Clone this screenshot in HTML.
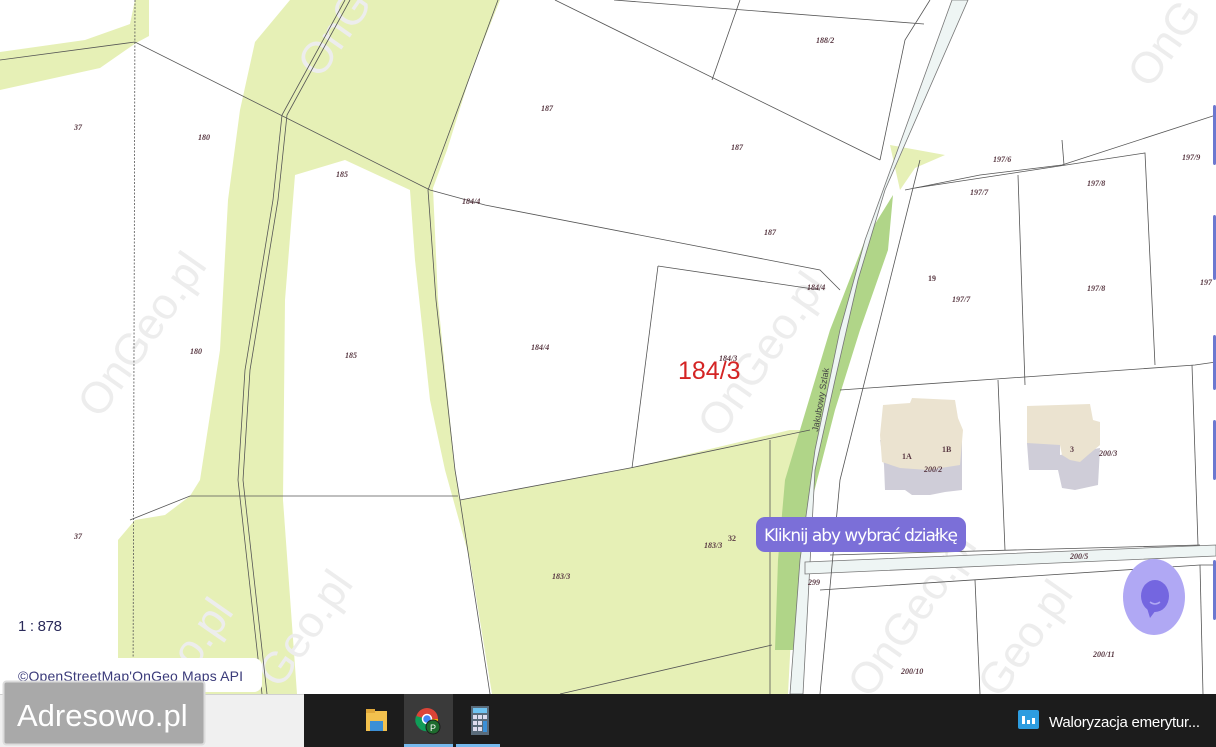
<!DOCTYPE html>
<html><head><meta charset="utf-8">
<style>
html,body{margin:0;padding:0;width:1216px;height:747px;overflow:hidden;background:#fff;font-family:"Liberation Sans",sans-serif}
svg{position:absolute;left:0;top:0}
.lb{font:italic bold 8px "Liberation Serif",serif;fill:#5a3a44}
.wm{font:44px "Liberation Sans",sans-serif;fill:#ededed}
</style></head><body>
<svg width="1216" height="747" viewBox="0 0 1216 747">
<!-- green areas -->
<g fill="#e6f0b6">
<polygon points="0,52 85,40 130,24 135,0 149,0 149,36 136,43 100,68 0,90"/>
<polygon points="290,0 500,0 472,70 447,150 433,188 438,300 455,470 460,500 630,468 790,430 812,430 795,560 788,694 492,694 470,560 445,470 430,400 415,260 410,190 345,160 295,175 285,300 283,500 297,694 135,694 118,694 118,540 135,520 165,515 190,496 200,480 220,350 228,200 240,110 255,42"/>
<polygon points="890,145 945,155 915,168 900,190"/>
</g>
<!-- watermarks -->
<g class="wm">
<text transform="translate(320,80) rotate(-55)">OnGeo</text>
<text transform="translate(100,420) rotate(-55)">OnGeo.pl</text>
<text transform="translate(720,440) rotate(-55)">OnGeo.pl</text>
<text transform="translate(180,690) rotate(-55)">eo.pl</text>
<text transform="translate(280,690) rotate(-55)">Geo.pl</text>
<text transform="translate(870,700) rotate(-55)">OnGeo.pl</text>
<text transform="translate(1000,700) rotate(-55)">Geo.pl</text>
<text transform="translate(1150,90) rotate(-55)">OnG</text>
</g>
<polygon fill="#b0d588" points="893,195 888,250 860,330 835,410 812,500 805,600 800,650 775,650 778,560 785,480 800,430 830,330 865,240"/>
<!-- roads -->
<polygon fill="#eef5f4" stroke="#777" stroke-width="0.8" points="952,0 968,0 885,190 858,280 835,380 815,470 803,694 790,694 800,560 815,450 840,330 865,240"/>
<polygon fill="#eef5f4" stroke="#777" stroke-width="0.8" points="805,562 1216,545 1216,556 805,574"/>
<!-- lines -->
<g stroke="#555" stroke-width="0.8" fill="none">
<polyline points="0,60 135,42 430,190 485,205 820,270 840,290"/>
<polyline points="135,0 133,694" stroke-dasharray="2,1.5"/>
<polyline points="498,0 428,190 436,300 455,470 460,500 490,694"/>
<polyline points="345,0 282,115 273,200 245,370 238,480 262,694"/>
<polyline points="350,0 287,115 278,200 250,370 243,480 267,694"/>
<polyline points="130,520 190,496 458,496"/>
<polyline points="460,500 630,468 810,430"/>
<polyline points="658,266 632,468"/>
<polyline points="658,266 820,290"/>
<polyline points="555,0 880,160"/>
<polyline points="614,0 924,24"/>
<polyline points="740,0 712,80"/>
<polyline points="930,0 905,40 880,160"/>
<polyline points="905,190 980,175 1062,165 1216,115"/>
<polyline points="915,188 1145,153 1155,365"/>
<polyline points="1018,175 1025,385"/>
<polyline points="1062,140 1064,165"/>
<polyline points="920,160 860,400 840,480 820,694"/>
<polyline points="840,390 1195,365 1216,362"/>
<polyline points="998,380 1005,550"/>
<polyline points="1192,365 1198,545"/>
<polyline points="830,555 1200,545"/>
<polyline points="820,590 1200,565 1216,565"/>
<polyline points="975,580 980,694"/>
<polyline points="1200,565 1203,694"/>
<polyline points="560,694 772,645"/>
<polyline points="770,440 770,694"/>
</g>
<!-- buildings -->
<g>
<polygon fill="#cfcdd8" points="880,440 884,465 885,490 905,490 912,495 930,495 945,492 962,490 962,440"/>
<polygon fill="#ebe3d0" points="883,405 910,403 912,398 955,400 958,418 963,430 960,465 928,470 900,468 882,462 880,435"/>
<polygon fill="#cfcdd8" points="1027,443 1060,443 1060,455 1100,448 1098,485 1075,490 1062,488 1058,470 1029,470"/>
<polygon fill="#ebe3d0" points="1027,406 1090,404 1093,420 1100,422 1100,445 1088,455 1080,462 1070,460 1062,455 1060,445 1027,443"/>
</g>
<!-- labels -->
<g class="lb">
<text x="74" y="130">37</text><text x="198" y="140">180</text><text x="336" y="177">185</text>
<text x="541" y="111">187</text><text x="731" y="150">187</text><text x="764" y="235">187</text>
<text x="816" y="43">188/2</text><text x="462" y="204">184/4</text><text x="807" y="290">184/4</text>
<text x="190" y="354">180</text><text x="345" y="358">185</text><text x="531" y="350">184/4</text>
<text x="719" y="361">184/3</text><text x="74" y="539">37</text><text x="552" y="579">183/3</text>
<text x="704" y="548">183/3</text><text x="728" y="541" style="font-style:normal">32</text>
<text x="993" y="162">197/6</text><text x="970" y="195">197/7</text><text x="1087" y="186">197/8</text>
<text x="1182" y="160">197/9</text><text x="1087" y="291">197/8</text><text x="952" y="302">197/7</text>
<text x="928" y="281" style="font-style:normal">19</text><text x="1200" y="285">197</text>
<text x="902" y="459" style="font-style:normal">1A</text><text x="942" y="452" style="font-style:normal">1B</text>
<text x="924" y="472">200/2</text><text x="1070" y="452" style="font-style:normal">3</text>
<text x="1099" y="456">200/3</text><text x="1070" y="559">200/5</text><text x="808" y="585">299</text>
<text x="901" y="674">200/10</text><text x="1093" y="657">200/11</text>
</g>
<text transform="translate(818,432) rotate(-80)" style="font:9px 'Liberation Sans',sans-serif;fill:#444">Jakubowy Szlak</text>
<text x="678" y="379" style="font:25px 'Liberation Sans',sans-serif;fill:#d42424">184/3</text>
<!-- right edge buttons -->
<g fill="#6c78d0">
<rect x="1213" y="105" width="3" height="60" rx="2"/><rect x="1213" y="215" width="3" height="65" rx="2"/>
<rect x="1213" y="335" width="3" height="55" rx="2"/><rect x="1213" y="420" width="3" height="60" rx="2"/>
<rect x="1213" y="560" width="3" height="60" rx="2"/>
</g>
<!-- tooltip -->
<rect x="756" y="517" width="210" height="35" rx="9" fill="#7b6fd8"/>
<text x="764" y="541" style="font:17px 'DejaVu Sans',sans-serif;fill:#fff" textLength="194">Kliknij aby wybrać działkę</text>
<!-- chat -->
<ellipse cx="1154" cy="597" rx="31" ry="38" fill="#b0a8f4"/>
<ellipse cx="1155" cy="596" rx="14" ry="16" fill="#7466e0"/>
<polygon points="1147,608 1150,618 1156,610" fill="#7466e0"/>
<path d="M1150,602 Q1155,606 1160,602" stroke="#b0a8f4" stroke-width="1.5" fill="none"/>
<!-- scale + attribution -->
<text x="18" y="631" style="font:15px 'Liberation Sans',sans-serif;fill:#2a2a5a" textLength="44">1 : 878</text>
<rect x="-10" y="658" width="272" height="34" rx="8" fill="#fff"/>
<text x="18" y="681" style="font:14px 'Liberation Sans',sans-serif;fill:#3a3a7a" textLength="225">©OpenStreetMap'OnGeo Maps API</text>
<!-- taskbar -->
<rect x="0" y="694" width="304" height="53" fill="#f0f0f0"/>
<rect x="0" y="694" width="304" height="1" fill="#d0d0d0"/>
<rect x="304" y="694" width="912" height="53" fill="#1c1c1c"/>
<rect x="404" y="694" width="49" height="53" fill="#3a3a3a"/>
<rect x="404" y="744" width="49" height="3" fill="#76b9ed"/>
<rect x="456" y="744" width="44" height="3" fill="#76b9ed"/>
<!-- folder -->
<rect x="366" y="711" width="21" height="20" fill="#f2c14e"/><rect x="366" y="709" width="9" height="4" fill="#e0a83a"/>
<rect x="370" y="721" width="13" height="10" fill="#3b8fd6"/>
<!-- chrome -->
<circle cx="427" cy="719" r="11" fill="#db4437"/>
<path d="M427,719 L437,724 A11,11 0 0 1 418,727 Z" fill="#0f9d58"/>
<path d="M427,719 L418,727 A11,11 0 0 1 416,716 Z" fill="#0f9d58"/>
<path d="M427,719 L438,719 A11,11 0 0 1 431,729 Z" fill="#f4b400"/>
<circle cx="427" cy="719" r="4.5" fill="#4285f4" stroke="#fff" stroke-width="1.5"/>
<circle cx="433" cy="727" r="7" fill="#1e6b2e" stroke="#1c1c1c" stroke-width="1"/>
<text x="430" y="731" style="font:9px 'Liberation Sans',sans-serif;fill:#fff">P</text>
<!-- calc -->
<rect x="471" y="706" width="18" height="29" fill="#5a6b7a"/>
<rect x="473" y="708" width="14" height="5" fill="#6fc3f0"/>
<g fill="#dde"><rect x="473" y="715" width="4" height="4"/><rect x="478" y="715" width="4" height="4"/><rect x="483" y="715" width="4" height="4"/>
<rect x="473" y="721" width="4" height="4"/><rect x="478" y="721" width="4" height="4"/><rect x="473" y="727" width="4" height="4"/><rect x="478" y="727" width="4" height="4"/></g>
<rect x="483" y="721" width="4" height="11" fill="#3b8fd6"/>
<!-- notify -->
<rect x="1018" y="710" width="21" height="19" rx="2" fill="#2d9de0"/>
<rect x="1022" y="716" width="3" height="8" fill="#fff"/><rect x="1027" y="720" width="3" height="4" fill="#fff"/><rect x="1032" y="718" width="3" height="6" fill="#fff"/>
<text x="1049" y="727" style="font:15px 'Liberation Sans',sans-serif;fill:#fff" textLength="151">Waloryzacja emerytur...</text>
<!-- adresowo -->
<rect x="3.5" y="681.5" width="201" height="63" rx="3" fill="#a9a9a9" stroke="#dcdcdc" stroke-width="2"/>
<text x="17" y="726" style="font:31px 'Liberation Sans',sans-serif;fill:#fff">Adresowo.pl</text>
</svg>
</body></html>
